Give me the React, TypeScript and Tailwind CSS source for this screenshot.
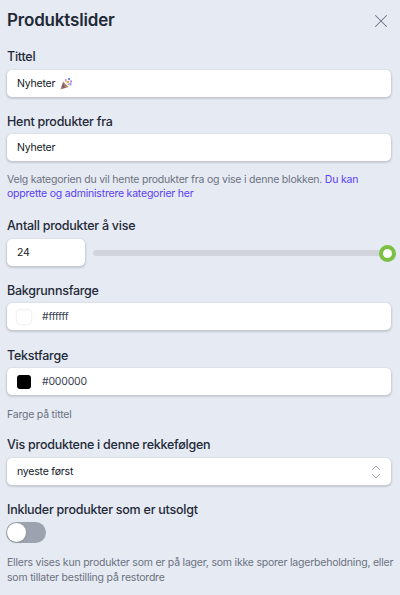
import { X, ChevronsUpDown } from 'lucide-react';

const inputCls = 'h-[27px] bg-white rounded-[5px] shadow-[0_1px_2px_1px_rgba(0,0,0,0.14)] flex items-center text-[10.5px] tracking-[-0.02em] text-[#111827]';
const helpCls = 'text-[10.5px] tracking-[-0.02em] text-[#6b7280]';

function Label({ children, className = '' }: { children: React.ReactNode; className?: string }) {
  return <div className={`text-[12.5px] tracking-[-0.02em] leading-[20px] font-medium text-[#1f2937] ${className}`}>{children}</div>;
}

function Party() {
  return (
    <svg width="12" height="12" viewBox="0 0 12 12" className="ml-[5px]">
      <path d="M0.5 11.5 L3 3.5 L8.5 9 Z" fill="#a9825f" />
      <path d="M1.5 9.5 L3.5 5 L5 10 Z" fill="#7d5a78" />
      <rect x="5" y="1" width="1.5" height="2.5" fill="#e58ab8" />
      <rect x="8" y="0" width="2" height="2" fill="#6d8fe0" />
      <rect x="10" y="2.5" width="2" height="2" fill="#c07be0" />
      <rect x="6.5" y="3" width="2.5" height="2" fill="#e3b04c" />
      <rect x="9.5" y="5" width="2" height="2.5" fill="#7fb0e8" />
      <rect x="7.5" y="5.5" width="2" height="1.5" fill="#e58ab8" />
    </svg>
  );
}

export default function App() {
  return (
    <div className="w-[400px] h-[595px] overflow-hidden bg-[#e6eaf3] pl-[7px] pr-[9px] font-['Inter',sans-serif]">
      <div className="flex items-center justify-between h-[40px] pt-[1px]">
        <h1 className="text-[17px] tracking-[-0.01em] font-semibold text-[#1f2937]">Produktslider</h1>
        <X size={22} strokeWidth={1.1} className="text-[#6b7280] mr-[-1px]" />
      </div>

      <Label className="mt-[7px] mb-[3px]">Tittel</Label>
      <div className={`${inputCls} pl-[10px]`}>Nyheter <Party /></div>

      <Label className="mt-[15px] mb-[2px]">Hent produkter fra</Label>
      <div className={`${inputCls} pl-[10px]`}>Nyheter</div>
      <p className={`${helpCls} mt-[12px] leading-[14px]`}>
        Velg kategorien du vil hente produkter fra og vise i denne blokken.{' '}
        <span className="text-[#5b3df5]">Du kan opprette og administrere kategorier her</span>
      </p>

      <Label className="mt-[15px] mb-[3px]">Antall produkter å vise</Label>
      <div className="flex items-center gap-[8px]">
        <div className={`${inputCls} w-[78px] pl-[10px]`}>24</div>
        <div className="relative flex-1 h-[6px] rounded-full bg-[#d1d5db]">
          <div className="absolute right-[-5px] top-[-5px] w-[17px] h-[17px] rounded-full bg-white border-[4px] border-[#7ac143]" />
        </div>
      </div>

      <Label className="mt-[15px] mb-[2px]">Bakgrunnsfarge</Label>
      <div className={`${inputCls} pl-[10px] gap-[11px]`}>
        <span className="w-[14px] h-[14px] rounded-[3px] bg-white shadow-[0_0_2px_rgba(0,0,0,0.2)]" />
        <span className="text-[#374151]">#ffffff</span>
      </div>

      <Label className="mt-[16px] mb-[2px]">Tekstfarge</Label>
      <div className={`${inputCls} pl-[10px] gap-[11px]`}>
        <span className="w-[14px] h-[14px] rounded-[3px] bg-black" />
        <span className="text-[#374151]">#000000</span>
      </div>
      <p className={`${helpCls} mt-[13px] leading-[14px]`}>Farge på tittel</p>

      <Label className="mt-[13px] mb-[3px]">Vis produktene i denne rekkefølgen</Label>
      <div className={`${inputCls} pl-[10px] justify-between pr-[6px]`}>
        nyeste først
        <ChevronsUpDown size={18} strokeWidth={1.3} className="text-[#9ca3af]" />
      </div>

      <Label className="mt-[15px] mb-[2px]">Inkluder produkter som er utsolgt</Label>
      <div className="w-[40px] h-[21px] ml-[-1px] rounded-full bg-[#9ca3af] relative">
        <div className="absolute left-[0px] top-[0px] w-[19px] h-[19px] mt-[1px] ml-[1px] rounded-full bg-white shadow" />
      </div>
      <p className={`${helpCls} mt-[12px] mr-[-6px] leading-[15px]`}>
        Ellers vises kun produkter som er på lager, som ikke sporer lagerbeholdning, eller som tillater bestilling på restordre
      </p>
    </div>
  );
}
